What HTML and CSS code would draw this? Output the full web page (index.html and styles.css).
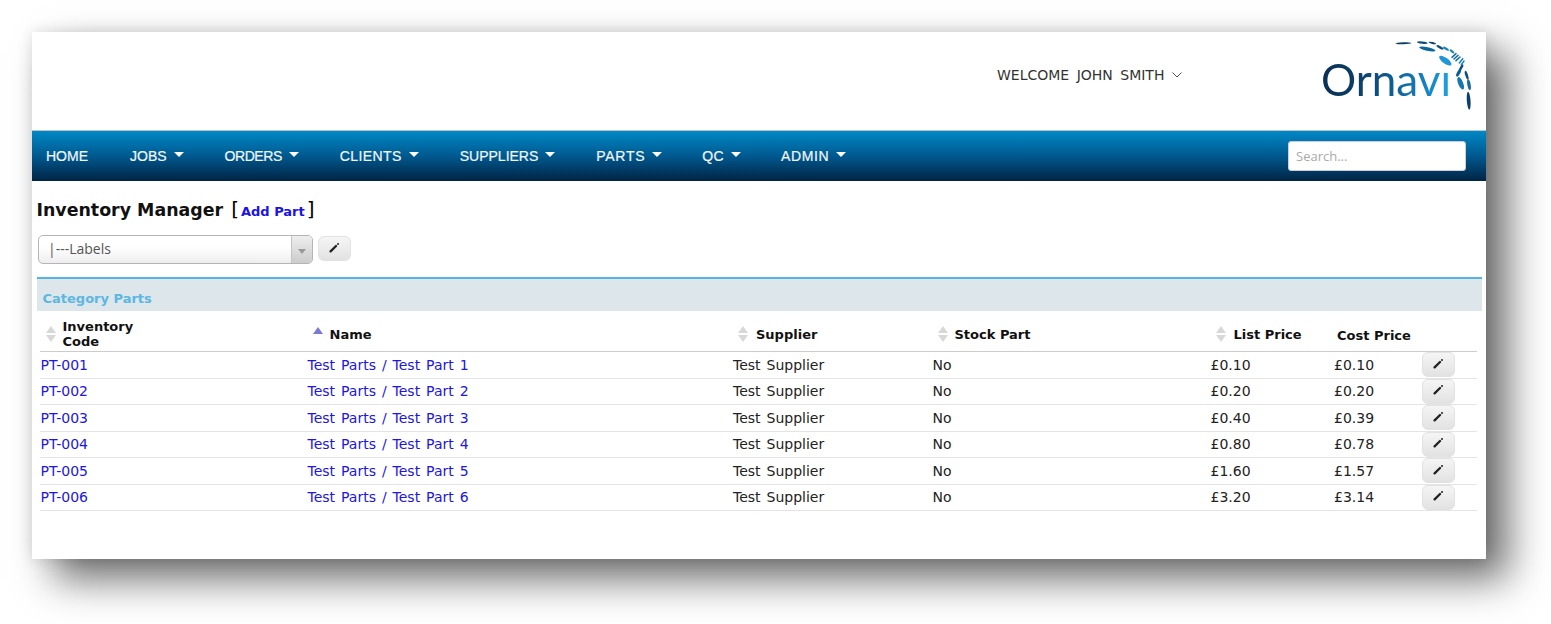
FILE: index.html
```html
<!DOCTYPE html>
<html lang="en">
<head>
<meta charset="utf-8">
<title>Inventory Manager</title>
<link rel="stylesheet" href="styles.css">
</head>
<body>
<svg class="defs" width="0" height="0"><defs>
  <g id="pen"><path d="M1.6 9.4 7 4" fill="none" stroke="#222" stroke-width="2.3" stroke-linecap="round"/><circle cx="9" cy="2" r="1" fill="#222"/></g>
</defs></svg>
<div class="card">
  <header class="top">
    <div class="welcome">WELCOME JOHN SMITH <svg class="chev" width="10" height="6" viewBox="0 0 10 6"><path d="M.5.5 5 5 9.5.5" fill="none" stroke="#555" stroke-width="1"/></svg></div>
    <div class="logo">
      <div class="logo-text"><span class="logo-main">Ornav</span><span class="logo-i">i</span></div>
      <svg class="logo-arc" width="85" height="72" viewBox="0 0 255 216">
        <g fill="#0f4e7c">
          <ellipse cx="40" cy="16" rx="24" ry="3" transform="rotate(-2 40 16)" fill="#0b3f68"/>
          <ellipse cx="97" cy="14" rx="16" ry="3.6" transform="rotate(6 97 14)"/>
          <ellipse cx="127" cy="15" rx="11" ry="2.8" transform="rotate(14 127 15)" fill="#0b3f68"/>
          <ellipse cx="112" cy="33" rx="25" ry="5.5" transform="rotate(13 112 33)" fill="#0c669c"/>
          <ellipse cx="150" cy="28" rx="12" ry="3.6" transform="rotate(28 150 28)"/>
          <ellipse cx="168" cy="32" rx="10" ry="3.4" transform="rotate(32 168 32)" fill="#1a83bd"/>
          <ellipse cx="186" cy="40" rx="9" ry="3.4" transform="rotate(40 186 40)" fill="#1a83bd"/>
          <ellipse cx="166" cy="68" rx="22" ry="8.5" transform="rotate(36 166 68)" fill="#2296d6"/>
          <path d="M186 58l12-11M192 63l12-11M198 68l12-11" stroke="#156fa8" stroke-width="4.6" stroke-linecap="round"/>
          <path d="M208 75l10-13M214 80l8-11" stroke="#1a83bd" stroke-width="4.6" stroke-linecap="round"/>
          <ellipse cx="206" cy="104" rx="13" ry="5" transform="rotate(-62 206 104)" fill="#0f5e92"/>
          <ellipse cx="214" cy="88" rx="10" ry="4" transform="rotate(-60 214 88)"/>
          <ellipse cx="212" cy="136" rx="20" ry="7.5" transform="rotate(68 212 136)" fill="#1577b0"/>
          <ellipse cx="230" cy="112" rx="14" ry="4" transform="rotate(72 230 112)"/>
          <ellipse cx="237" cy="140" rx="16" ry="5" transform="rotate(80 237 140)" fill="#1a6a9f"/>
          <ellipse cx="236" cy="188" rx="27" ry="5.6" transform="rotate(86 236 188)" fill="#0b3f68"/>
        </g>
      </svg>
    </div>
  </header>
  <nav class="nav">
    <ul class="menu">
      <li class="m-home">HOME</li>
      <li class="m-jobs">JOBS<i class="caret"></i></li>
      <li class="m-orders">ORDERS<i class="caret"></i></li>
      <li class="m-clients">CLIENTS<i class="caret"></i></li>
      <li class="m-suppliers">SUPPLIERS<i class="caret"></i></li>
      <li class="m-parts">PARTS<i class="caret"></i></li>
      <li class="m-qc">QC<i class="caret"></i></li>
      <li class="m-admin">ADMIN<i class="caret"></i></li>
    </ul>
    <input class="search" type="text" placeholder="Search...">
  </nav>
  <main class="content">
    <h1 class="title">Inventory Manager <span class="bracket">[</span><a class="add">Add Part</a><span class="bracket">]</span></h1>
    <div class="filter">
      <div class="combo"><span class="combo-val">|---Labels</span><span class="combo-btn"><i class="combo-arrow"></i></span></div>
      <button class="editbtn wide" type="button"><svg class="pen" width="11" height="11" viewBox="0 0 11 11"><use href="#pen"/></svg></button>
    </div>
    <div class="section">Category Parts</div>
    <table class="parts">
      <thead>
        <tr>
          <th class="c1"><span class="sorter"><i class="up"></i><i class="down"></i></span><span class="th-text">Inventory<br>Code</span></th>
          <th class="c2"><span class="sorter active"><i class="up"></i></span><span class="th-text">Name</span></th>
          <th class="c3"><span class="sorter"><i class="up"></i><i class="down"></i></span><span class="th-text">Supplier</span></th>
          <th class="c4"><span class="sorter"><i class="up"></i><i class="down"></i></span><span class="th-text">Stock Part</span></th>
          <th class="c5"><span class="sorter"><i class="up"></i><i class="down"></i></span><span class="th-text">List Price</span></th>
          <th class="c6"><span class="th-text">Cost Price</span></th>
          <th class="c7"></th>
        </tr>
      </thead>
      <tbody>
        <tr><td><a>PT-001</a></td><td><a>Test Parts / Test Part 1</a></td><td>Test Supplier</td><td>No</td><td>£0.10</td><td>£0.10</td><td class="act"><button class="editbtn" type="button"><svg class="pen" width="11" height="11" viewBox="0 0 11 11"><use href="#pen"/></svg></button></td></tr>
        <tr><td><a>PT-002</a></td><td><a>Test Parts / Test Part 2</a></td><td>Test Supplier</td><td>No</td><td>£0.20</td><td>£0.20</td><td class="act"><button class="editbtn" type="button"><svg class="pen" width="11" height="11" viewBox="0 0 11 11"><use href="#pen"/></svg></button></td></tr>
        <tr><td><a>PT-003</a></td><td><a>Test Parts / Test Part 3</a></td><td>Test Supplier</td><td>No</td><td>£0.40</td><td>£0.39</td><td class="act"><button class="editbtn" type="button"><svg class="pen" width="11" height="11" viewBox="0 0 11 11"><use href="#pen"/></svg></button></td></tr>
        <tr><td><a>PT-004</a></td><td><a>Test Parts / Test Part 4</a></td><td>Test Supplier</td><td>No</td><td>£0.80</td><td>£0.78</td><td class="act"><button class="editbtn" type="button"><svg class="pen" width="11" height="11" viewBox="0 0 11 11"><use href="#pen"/></svg></button></td></tr>
        <tr><td><a>PT-005</a></td><td><a>Test Parts / Test Part 5</a></td><td>Test Supplier</td><td>No</td><td>£1.60</td><td>£1.57</td><td class="act"><button class="editbtn" type="button"><svg class="pen" width="11" height="11" viewBox="0 0 11 11"><use href="#pen"/></svg></button></td></tr>
        <tr><td><a>PT-006</a></td><td><a>Test Parts / Test Part 6</a></td><td>Test Supplier</td><td>No</td><td>£3.20</td><td>£3.14</td><td class="act"><button class="editbtn" type="button"><svg class="pen" width="11" height="11" viewBox="0 0 11 11"><use href="#pen"/></svg></button></td></tr>
      </tbody>
    </table>
  </main>
</div>
</body>
</html>
```
FILE: styles.css
```css
* { box-sizing: border-box; }
html, body { margin: 0; padding: 0; background: #fff; height: 624px; overflow: hidden; }
body { padding: 32px 0 0 32px; font-family: "DejaVu Sans", Verdana, sans-serif; font-size: 14px; color: #222; }
.defs { position: absolute; }
.card { width: 1454px; height: 527px; background: #fff; box-shadow: 22px 20px 38px rgba(0,0,0,.58), 0 0 14px rgba(0,0,0,.12); }
.top { height: 98px; position: relative; }
.welcome { position: absolute; left: 965px; top: 35px; font-size: 14px; word-spacing: 3px; color: #333; white-space: nowrap; }
.chev { vertical-align: 2px; margin-left: 0; }
.logo { position: absolute; left: 1288px; top: 6px; width: 160px; height: 72px; }
.logo-text { position: absolute; left: 1px; top: 15px; display: flex; font-family: Lato, "Open Sans", sans-serif; font-size: 44px; line-height: 52px; font-weight: 400; white-space: nowrap; }
.logo-main { background: linear-gradient(90deg, #0a2f55 0%, #0b3f68 32%, #0c5c90 58%, #1278b5 80%, #1795d4 100%); -webkit-background-clip: text; background-clip: text; color: transparent; }
.logo-i { color: #1a9edb; -webkit-mask-image: linear-gradient(transparent 36%, #000 36%); mask-image: linear-gradient(transparent 36%, #000 36%); }
.logo-arc { position: absolute; left: 70px; top: 0; }
.nav { height: 51px; display: flex; align-items: center; justify-content: space-between; background: linear-gradient(#0088c6 0%, #00598f 50%, #012444 100%); border-top: 1px solid #b9c4cc; padding: 0 20px 0 14px; }
.menu { list-style: none; margin: 0; padding: 0; display: flex; font-family: "Liberation Sans", Arial, sans-serif; font-size: 14px; color: #f2f7fa; -webkit-text-stroke: .2px #f2f7fa; }
.menu li { display: flex; align-items: center; white-space: nowrap; }
.m-home { margin-right: 42px; }
.m-jobs { margin-right: 41px; }
.m-orders { margin-right: 41px; letter-spacing: -.45px; }
.m-clients { margin-right: 41px; letter-spacing: .4px; }
.m-suppliers { margin-right: 41px; }
.m-parts { margin-right: 40px; letter-spacing: .7px; }
.m-qc { margin-right: 40px; letter-spacing: .4px; }
.m-admin { letter-spacing: .6px; }
.caret { width: 0; height: 0; border-left: 5px solid transparent; border-right: 5px solid transparent; border-top: 5px solid #fff; margin: -4px 0 0 7px; }
.search { width: 178px; height: 30px; border: 1px solid #ccd; border-radius: 3px; background: #fff; padding: 0 7px; font-family: "Open Sans", sans-serif; font-size: 13px; outline: none; }
.search::placeholder { color: #aaa; }
.content { padding: 0 4px 0 4.5px; }
.title { margin: 0; padding-top: 16px; height: 54px; font-size: 17.4px; line-height: 24px; font-weight: 700; color: #111; }
.bracket { font-weight: 400; font-size: 20px; margin-left: 2px; color: #000; }
.add { color: #1a12e8; font-size: 13px; margin: 0 0 0 2px; }
.filter { display: flex; align-items: flex-start; padding-left: 1.5px; gap: 5px; height: 42px; }
.combo { width: 275px; height: 29px; border: 1px solid #b5b5b5; border-radius: 5px; background: linear-gradient(#fff 40%, #eee); display: flex; justify-content: space-between; overflow: hidden; }
.combo-val { padding: 3px 0 0 9px; font-family: "Open Sans", sans-serif; font-size: 14px; color: #555; }
.combo-btn { width: 21px; border-left: 1px solid #c4c4c4; background: linear-gradient(#eee, #ccc); display: flex; align-items: center; justify-content: center; }
.combo-arrow { width: 0; height: 0; border-left: 4px solid transparent; border-right: 4px solid transparent; border-top: 5px solid #999; margin-top: 3px; }
.editbtn { width: 33px; height: 25px; padding: 0; border: 1px solid #e2e2e2; border-radius: 6px; background: linear-gradient(#f5f5f5, #e2e2e2); display: inline-flex; align-items: center; justify-content: center; }
.editbtn.wide { margin-top: 1px; }
.pen { display: block; margin-top: -3px; }
.section { height: 34px; background: #dce6eb; border-top: 2px solid #56b4e0; color: #5db7e0; font-weight: 700; font-size: 13px; line-height: 39px; padding-left: 6px; }
.parts { width: 1437px; margin-left: 3px; border-collapse: collapse; table-layout: fixed; }
.parts th { height: 40.5px; padding: 7px 0 0; text-align: left; font-size: 13px; line-height: 15px; color: #111; font-weight: 700; border-bottom: 1.5px solid #ccc; vertical-align: middle; white-space: nowrap; }
.parts th > span { display: inline-block; vertical-align: middle; }
.c1 { width: 267px; }
.c2 { width: 425.5px; }
.c3 { width: 199.5px; }
.c4 { width: 278px; }
.c5 { width: 123.5px; }
.c6 { width: 88px; }
.sorter { position: relative; height: 18px; margin-left: 6px; }
.c1 .sorter { width: 17px; }
.c1 .th-text { margin-top: -2px; }
.c2 .sorter { width: 17px; }
.c3 .sorter { width: 18px; }
.c4 .sorter { width: 17px; }
.c5 .sorter { width: 18px; }
.c6 .th-text { margin-left: 4px; }
.sorter i { position: absolute; left: 0; width: 0; height: 0; border-left: 5px solid transparent; border-right: 5px solid transparent; }
.sorter .up { top: 0; border-bottom: 7px solid #d8d8d8; }
.sorter .down { top: 9px; border-top: 7px solid #d8d8d8; }
.sorter.active .up { top: 1px; border-bottom-color: #7a7ad0; }
.parts td { height: 26.5px; padding: 1px 0 0 1px; border-bottom: 1.5px solid #e4e4e4; color: #222; white-space: nowrap; line-height: 17px; font-size: 14px; word-spacing: 1.5px; }
.parts a { color: #2015e6; }
.parts td.act { padding: 0 0 0 1px; }
.parts td .editbtn { display: flex; margin-top: 0; height: 25px; }
```
